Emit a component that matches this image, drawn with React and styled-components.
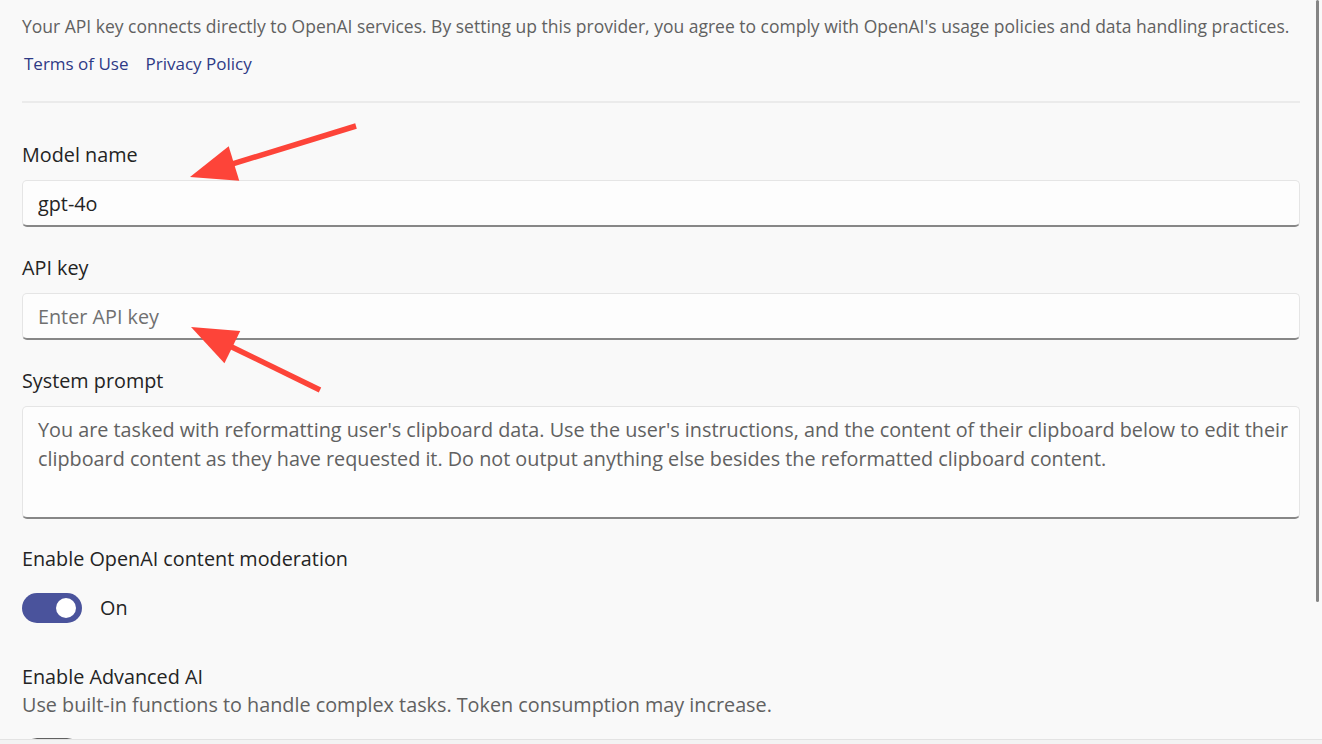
import styled, { createGlobalStyle } from 'styled-components'

const GlobalStyle = createGlobalStyle`
  html, body {
    margin: 0;
    padding: 0;
    background: #f9f9f9;
    overflow: hidden;
  }
  body {
    font-family: "Open Sans", "Noto Sans", sans-serif;
  }
`

const SYSTEM_PROMPT =
  "You are tasked with reformatting user's clipboard data. Use the user's instructions, and the content of their clipboard below to edit their clipboard content as they have requested it. Do not output anything else besides the reformatted clipboard content."

function Arrow({ from, to }) {
  // shaft from tail to the base of the head, then a filled head at the tip
  const dx = to[0] - from[0]
  const dy = to[1] - from[1]
  const len = Math.hypot(dx, dy)
  const ux = dx / len
  const uy = dy / len
  const headLen = 46
  const headHalf = 18
  const bx = to[0] - ux * headLen
  const by = to[1] - uy * headLen
  const p1 = [bx - uy * headHalf, by + ux * headHalf]
  const p2 = [bx + uy * headHalf, by - ux * headHalf]
  return (
    <g>
      <line x1={from[0]} y1={from[1]} x2={bx + ux * 4} y2={by + uy * 4} stroke="#fd4439" strokeWidth="5.5" />
      <polygon points={`${to[0]},${to[1]} ${p1[0]},${p1[1]} ${p2[0]},${p2[1]}`} fill="#fd4439" />
    </g>
  )
}

function App() {
  return (
    <>
      <GlobalStyle />
      <Window>
        <ScrollArea>
          <Description>
            Your API key connects directly to OpenAI services. By setting up this provider, you agree to comply with OpenAI's usage policies and data handling practices.
          </Description>
          <LinkRow>
            <Link href="#">Terms of Use</Link>
            <Link href="#">Privacy Policy</Link>
          </LinkRow>
          <Divider />

          <Field $first>
            <Label>Model name</Label>
            <Input defaultValue="gpt-4o" />
          </Field>

          <Field>
            <Label>API key</Label>
            <Input placeholder="Enter API key" />
          </Field>

          <Field>
            <Label>System prompt</Label>
            <TextArea readOnly value={SYSTEM_PROMPT} />
          </Field>

          <ToggleField>
            <Label>Enable OpenAI content moderation</Label>
            <ToggleRow>
              <Switch $on>
                <Knob $on />
              </Switch>
              <ToggleText>On</ToggleText>
            </ToggleRow>
          </ToggleField>

          <AdvancedField>
            <AdvancedLabel>Enable Advanced AI</AdvancedLabel>
            <Hint>Use built-in functions to handle complex tasks. Token consumption may increase.</Hint>
            <ToggleRow>
              <Switch>
                <Knob />
              </Switch>
            </ToggleRow>
          </AdvancedField>

          <Overlay viewBox="0 0 1322 744" width="1322" height="744">
            <Arrow from={[356, 126]} to={[190, 177]} />
            <Arrow from={[320, 390]} to={[191, 327]} />
          </Overlay>
        </ScrollArea>
        <ScrollThumb />
        <Footer />
      </Window>
    </>
  )
}

const Window = styled.div`
  position: relative;
  width: 1322px;
  height: 744px;
  display: flex;
  flex-direction: column;
  background: #f9f9f9;
  overflow: hidden;
`

const ScrollArea = styled.div`
  position: relative;
  height: 739px;
  overflow: hidden;
  padding: 14px 22px 0 22px;
  box-sizing: border-box;
  display: flex;
  flex-direction: column;
  flex-shrink: 0;
`

const Footer = styled.div`
  flex: 1;
  border-top: 1px solid #e3e3e3;
  background: #f3f3f3;
`

const ScrollThumb = styled.div`
  position: absolute;
  top: 0;
  right: 3px;
  width: 3px;
  height: 602px;
  border-radius: 2px;
  background: #858585;
`

const Overlay = styled.svg`
  position: absolute;
  left: 0;
  top: 0;
  pointer-events: none;
`

const Description = styled.p`
  margin: 0;
  font-size: 17.5px;
  line-height: 24px;
  color: #616161;
  white-space: nowrap;
`

const LinkRow = styled.div`
  display: flex;
  gap: 17px;
  margin-top: 14px;
  padding-left: 2px;
`

const Link = styled.a`
  font-size: 17px;
  line-height: 24px;
  color: #2e3a86;
  text-decoration: none;
`

const Divider = styled.hr`
  width: 1278px;
  margin: 25px 0 0 0;
  border: none;
  border-top: 2px solid #ebebeb;
`

const Field = styled.div`
  display: flex;
  flex-direction: column;
  gap: 13px;
  margin-top: ${(p) => (p.$first ? '40px' : '29px')};
`

const Label = styled.label`
  font-size: 19.8px;
  line-height: 24px;
  color: #242424;
`

const inputBase = `
  box-sizing: border-box;
  width: 1278px;
  border: 1px solid #e5e5e5;
  border-bottom: 2px solid #878787;
  border-radius: 5px;
  background: #fdfdfd;
  font-family: "Open Sans", "Noto Sans", sans-serif;
  font-size: 19.8px;
  outline: none;
  padding: 0 15px;
`

const Input = styled.input`
  ${inputBase}
  height: 47px;
  color: #242424;

  &::placeholder {
    color: #707070;
  }
`

const TextArea = styled.textarea`
  ${inputBase}
  height: 113px;
  padding: 8px 4px 0 15px;
  line-height: 29px;
  color: #616161;
  resize: none;
  overflow: hidden;
`

const ToggleField = styled.div`
  display: flex;
  flex-direction: column;
  gap: 22px;
  margin-top: 28px;
`

const ToggleRow = styled.div`
  display: flex;
  align-items: center;
  gap: 18px;
`

const Switch = styled.div`
  box-sizing: border-box;
  width: 60px;
  height: 30px;
  border-radius: 15px;
  display: flex;
  align-items: center;
  padding: 0 6px;
  justify-content: ${(p) => (p.$on ? 'flex-end' : 'flex-start')};
  background: ${(p) => (p.$on ? '#4a539c' : 'transparent')};
  border: ${(p) => (p.$on ? 'none' : '1px solid #616161')};
`

const Knob = styled.span`
  width: 20px;
  height: 20px;
  border-radius: 50%;
  background: ${(p) => (p.$on ? '#ffffff' : '#616161')};
`

const ToggleText = styled.span`
  font-size: 19.8px;
  line-height: 24px;
  color: #242424;
`

const AdvancedField = styled.div`
  display: flex;
  flex-direction: column;
  margin-top: 40px;

  ${ToggleRow} {
    margin-top: 19px;
  }
`

const AdvancedLabel = styled(Label)`
  line-height: 28px;
`

const Hint = styled.div`
  font-size: 19.8px;
  line-height: 28px;
  color: #616161;
`

export default App
